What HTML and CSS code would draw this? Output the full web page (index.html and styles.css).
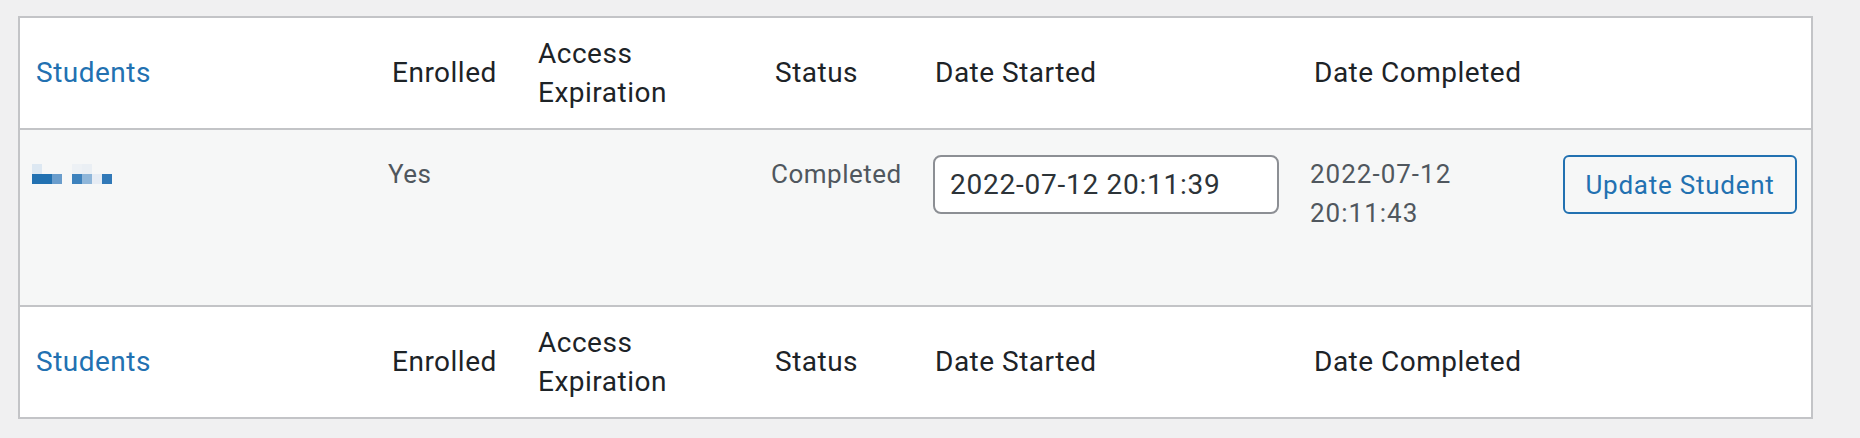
FILE: index.html
```html
<!DOCTYPE html>
<html lang="en">
<head>
<meta charset="utf-8">
<title>Students</title>
<link rel="stylesheet" href="styles.css">
</head>
<body>
<div class="wrap">
  <table class="students">
    <colgroup>
      <col class="c-name">
      <col class="c-enrolled">
      <col class="c-access">
      <col class="c-status">
      <col class="c-started">
      <col class="c-completed">
      <col class="c-action">
    </colgroup>
    <thead>
      <tr>
        <th><a class="sort-link" href="#">Students</a></th>
        <th>Enrolled</th>
        <th>Access Expiration</th>
        <th>Status</th>
        <th>Date Started</th>
        <th>Date Completed</th>
        <th></th>
      </tr>
    </thead>
    <tbody>
      <tr>
        <td>
          <svg class="redacted" width="80" height="20" viewBox="0 0 80 20" aria-label="Student name (hidden)">
            <rect x="0" y="0" width="10" height="10" fill="#dde8f2"/>
            <rect x="40" y="0" width="10" height="10" fill="#edf1f5"/>
            <rect x="50" y="0" width="10" height="10" fill="#eaeff4"/>
            <rect x="0" y="10" width="20" height="10" fill="#2271b1"/>
            <rect x="20" y="10" width="10" height="10" fill="#6a9dcc"/>
            <rect x="40" y="10" width="10" height="10" fill="#3d82bd"/>
            <rect x="50" y="10" width="10" height="10" fill="#8fb6d9"/>
            <rect x="60" y="10" width="10" height="10" fill="#e6ecf4"/>
            <rect x="70" y="10" width="10" height="10" fill="#3179b8"/>
          </svg>
        </td>
        <td>Yes</td>
        <td></td>
        <td>Completed</td>
        <td><input class="date-input" type="text" value="2022-07-12 20:11:39"></td>
        <td class="date">2022-07-12 20:11:43</td>
        <td><button class="btn-update" type="button">Update Student</button></td>
      </tr>
    </tbody>
    <tfoot>
      <tr>
        <th><a class="sort-link" href="#">Students</a></th>
        <th>Enrolled</th>
        <th>Access Expiration</th>
        <th>Status</th>
        <th>Date Started</th>
        <th>Date Completed</th>
        <th></th>
      </tr>
    </tfoot>
  </table>
</div>
</body>
</html>
```

FILE: styles.css
```css
html, body {
  margin: 0;
  padding: 0;
  background: #f0f0f1;
}

body {
  font-family: Roboto, "Liberation Sans", Arial, sans-serif;
  color: #1d2327;
}

.wrap {
  padding: 16px 0 0 18px;
}

.students {
  width: 1795px;
  table-layout: fixed;
  border-collapse: separate;
  border-spacing: 0;
  border: 2px solid #c3c4c7;
  background: #fff;
}

.c-name { width: 356px; }
.c-enrolled { width: 146px; }
.c-access { width: 237px; }
.c-status { width: 160px; }
.c-started { width: 379px; }
.c-completed { width: 253px; }
.c-action { width: 260px; }

.students th {
  height: 112px;
  padding: 0 16px;
  box-sizing: border-box;
  font-size: 28px;
  line-height: 39.2px;
  font-weight: 400;
  letter-spacing: 0.5px;
  text-align: left;
  vertical-align: middle;
  color: #1d2327;
}

.students thead th {
  border-bottom: 2px solid #c3c4c7;
}

.students tfoot th {
  border-top: 2px solid #c3c4c7;
}

.sort-link {
  color: #2271b1;
  text-decoration: none;
}

.students td {
  height: 175px;
  box-sizing: border-box;
  padding: 25px 12px 0;
  background: #f6f7f7;
  font-size: 26px;
  line-height: 39px;
  letter-spacing: 0.5px;
  color: #50575e;
  vertical-align: top;
}

.students td.date {
  letter-spacing: 1px;
}

.redacted {
  display: block;
  margin-top: 9px;
}

.date-input {
  display: block;
  box-sizing: border-box;
  width: 346px;
  height: 59px;
  margin: 0 0 0 2px;
  padding: 0 15px;
  border: 2px solid #8c8f94;
  border-radius: 8px;
  background: #fff;
  font-family: Roboto, "Liberation Sans", Arial, sans-serif;
  font-size: 28px;
  letter-spacing: 0.75px;
  color: #2c3338;
  outline: none;
}

.btn-update {
  display: block;
  box-sizing: border-box;
  width: 234px;
  height: 59px;
  margin: 0;
  padding: 0;
  border: 2px solid #2271b1;
  border-radius: 6px;
  background: #f6f7f7;
  font-family: Roboto, "Liberation Sans", Arial, sans-serif;
  font-size: 26px;
  letter-spacing: 0.75px;
  color: #2271b1;
  text-align: center;
  cursor: pointer;
}
```
